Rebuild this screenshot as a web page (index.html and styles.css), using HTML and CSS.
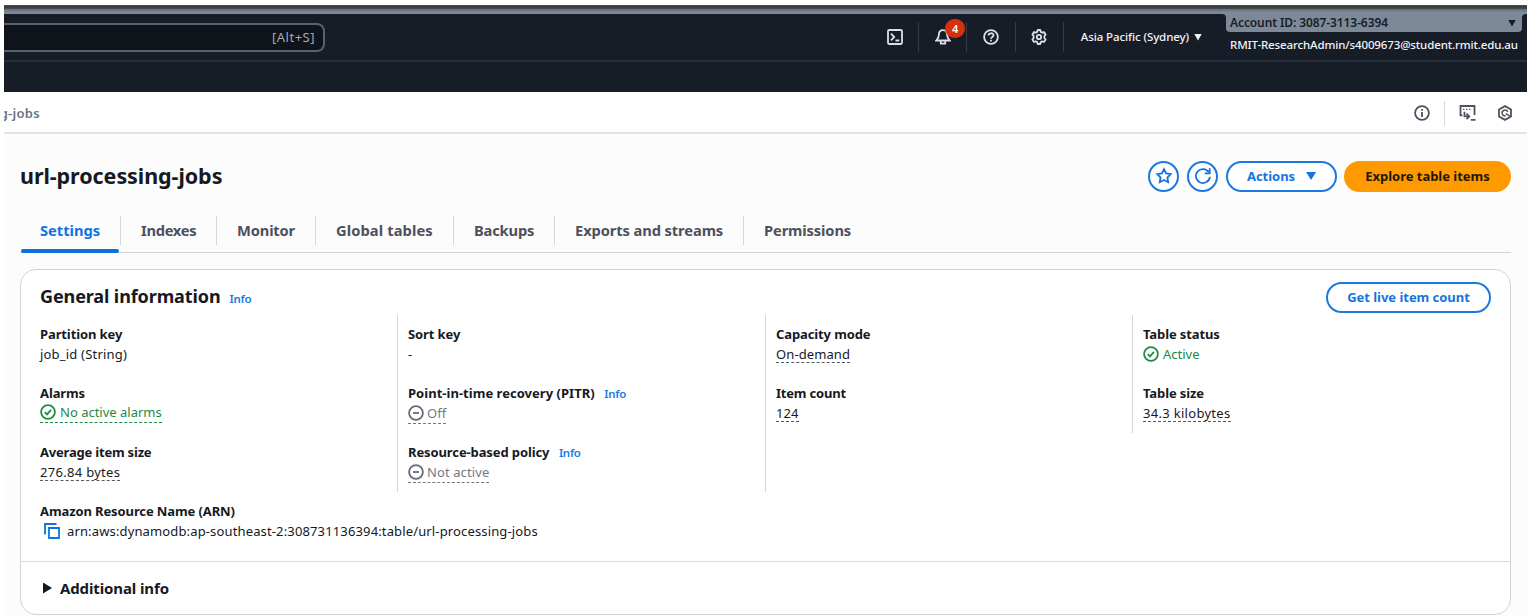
FILE: index.html
```html
<!DOCTYPE html>
<html lang="en">
<head>
<meta charset="utf-8">
<title>url-processing-jobs</title>
<link rel="stylesheet" href="styles.css">
</head>
<body>
<div class="page">
  <header class="header">
    <div class="top-strip"></div>
    <div class="account-strip"></div>
    <div class="nav">
      <div class="nav-main">
        <div class="search"><span>[Alt+S]</span></div>
        <div class="nav-tools">
          <div class="tool"><svg width="16" height="16" viewBox="0 0 16 16"><rect x="1" y="1" width="14" height="14" rx="1.2"/><path d="M4 4.7 7.2 8 4 11.3M8.5 11.5h3.8"/></svg></div>
          <div class="tool"><svg width="16" height="16" viewBox="0 0 16 16"><path d="M8 1.2C5 1.2 3.9 3.5 3.9 5.8c0 3-1.2 4.2-2.6 5.7h13.4c-1.4-1.5-2.6-2.7-2.6-5.7 0-2.3-1.1-4.6-4.1-4.6Z"/><path d="M5.8 12v2.6h4.4V12"/></svg><span class="badge">4</span></div>
          <div class="tool"><svg width="16" height="16" viewBox="0 0 16 16"><circle cx="8" cy="8" r="6.9"/><path d="M5.6 6.6C5.6 3.5 10.5 3.6 10.5 6.3 10.5 8 8 7.9 8 9.8M8 10.8v1.6"/></svg></div>
          <div class="tool"><svg width="16" height="16" viewBox="0 0 16 16"><path stroke-linejoin="round" d="M6.7 1h2.6l.5 1.9 1.3.7 1.9-.6 1.6 2.4L13.400 7v2l1.200 1.600L13 13l-1.900-.6-1.300.7L9.300 15H6.700l-.5-1.900-1.300-.7L3 13l-1.600-2.400L2.600 9V7L1.400 5.400 3 3l1.900.6 1.300-.7Z"/><circle cx="8" cy="8" r="2.200"/></svg></div>
        </div>
        <div class="region"><span>Asia Pacific (Sydney)</span><i class="caret"></i></div>
      </div>
      <div class="account">
        <div class="account-id"><span>Account ID: 3087-3113-6394</span><i class="caret"></i></div>
        <div class="account-user"><span>RMIT-ResearchAdmin/s4009673@student.rmit.edu.au</span></div>
      </div>
      <div class="nav-edge"></div>
    </div>
    <div class="favorites"></div>
  </header>

  <div class="crumbs">
    <div class="crumb"><span>g-jobs</span></div>
    <div class="crumb-tools">
      <svg width="16" height="16" viewBox="0 0 16 16"><circle cx="8" cy="8" r="6.900"/><path d="M8 7v5M8 4v1.700"/></svg>
      <i class="rule"></i>
      <svg class="shell" width="17" height="16" viewBox="0 0 17 16"><path d="M3.500 10.300H1.500V1h14v9"/><path d="M4 4.300h1.400M7 4.300h1.400M10 4.300h1.400" stroke-width="1.300"/><path d="M5.500 6.800v4.600H9M7.500 8.600l2.800 2.800-2.800 2.800M11.800 14.900h4.700"/></svg>
      <svg width="16" height="16" viewBox="0 0 16 16"><path d="m8 1.100 6 3.400v7l-6 3.400-6-3.400v-7Z"/><path d="m12.800 11.200-4-2.600M10.700 6.900A2.900 2.900 0 1 0 8.600 10.800" stroke-width="1.500"/></svg>
    </div>
  </div>

  <main class="content">
    <div class="title-row">
      <h1>url-processing-jobs</h1>
      <div class="actions">
        <button class="btn round"><svg width="18" height="18" viewBox="0 0 18 18"><path d="m9 2.200 2.100 4.300 4.600.7-3.300 3.300.8 4.700L9 13l-4.200 2.200.8-4.700-3.300-3.300 4.600-.7Z"/></svg></button>
        <button class="btn round"><svg width="18" height="18" viewBox="0 0 18 18"><path d="M15.900 9.800A7 7 0 1 1 14.800 5.200"/><path d="M15.700 1.300v5h-5"/></svg></button>
        <button class="btn menu"><span>Actions</span><i class="caret"></i></button>
        <button class="btn primary"><span>Explore table items</span></button>
      </div>
    </div>

    <nav class="tabs">
      <a class="tab active"><span>Settings</span></a>
      <a class="tab t-indexes"><span>Indexes</span></a>
      <a class="tab t-monitor"><span>Monitor</span></a>
      <a class="tab t-global"><span>Global tables</span></a>
      <a class="tab t-backups"><span>Backups</span></a>
      <a class="tab t-exports"><span>Exports and streams</span></a>
      <a class="tab t-perms"><span>Permissions</span></a>
    </nav>

    <section class="card">
      <div class="card-head">
        <h2>General information</h2><a class="info">Info</a>
        <button class="btn live"><span>Get live item count</span></button>
      </div>
      <div class="grid">
        <div class="col">
          <div class="field"><b>Partition key</b><p class="w20">job_id (String)</p></div>
          <div class="field"><b>Alarms</b><p class="ok dash-icon"><svg width="16" height="16" viewBox="0 0 16 16"><circle cx="8" cy="8" r="6.900"/><path d="m4.800 8.200 2.200 2.200 4-4.500"/></svg><span>No active alarms</span></p></div>
          <div class="field"><b class="tight">Average item size</b><p class="dash w30">276.84 bytes</p></div>
        </div>
        <div class="col">
          <div class="field"><b>Sort key</b><p>-</p></div>
          <div class="field"><b class="loose">Point-in-time recovery (PITR)</b><a class="info">Info</a><p class="off dash-icon"><svg width="16" height="16" viewBox="0 0 16 16"><circle cx="8" cy="8" r="6.900"/><path d="M5 8h6"/></svg><span>Off</span></p></div>
          <div class="field"><b>Resource-based policy</b><a class="info">Info</a><p class="off dash-icon"><svg width="16" height="16" viewBox="0 0 16 16"><circle cx="8" cy="8" r="6.900"/><path d="M5 8h6"/></svg><span>Not active</span></p></div>
        </div>
        <div class="col">
          <div class="field"><b>Capacity mode</b><p class="dash">On-demand</p></div>
          <div class="field"><b class="tight">Item count</b><p class="dash">124</p></div>
        </div>
        <div class="col short">
          <div class="field"><b>Table status</b><p class="ok"><svg width="16" height="16" viewBox="0 0 16 16"><circle cx="8" cy="8" r="6.900"/><path d="m4.800 8.200 2.200 2.200 4-4.500"/></svg><span>Active</span></p></div>
          <div class="field"><b>Table size</b><p class="dash w30">34.3 kilobytes</p></div>
        </div>
      </div>
      <div class="arn">
        <b>Amazon Resource Name (ARN)</b>
        <p><svg width="16" height="16" viewBox="0 0 16 16"><path d="M1 11.500V1h11.500M5 5h10v10H5Z"/></svg><span>arn:aws:dynamodb:ap-southeast-2:308731136394:table/url-processing-jobs</span></p>
      </div>
      <div class="more"><i class="expand"></i><span>Additional info</span></div>
    </section>
  </main>
</div>
</body>
</html>
```
FILE: styles.css
```css
* { box-sizing: border-box; }
body {
  margin: 0;
  background: #fff;
  color: #16191f;
  font: 13px/20px "Noto Sans", "Open Sans", sans-serif;
  letter-spacing: 0.1px;
  overflow: hidden;
}
h1, h2, p { margin: 0; }
b, h1, h2 { font-weight: 700; }
b { letter-spacing: -0.110px; }
b.tight { letter-spacing: -0.200px; }
b.loose { letter-spacing: 0.030px; }
svg { fill: none; stroke: currentColor; stroke-width: 1.8; flex: none; display: block; }
.page { width: 1523px; height: 616px; margin-left: 4px; padding-top: 5px; display: flex; flex-direction: column; }

/* Global header */
.header { flex: none; color: #f3f3f7; }
.top-strip { height: 4px; background: linear-gradient(#55584f, #383a36 40%, #4a4f55); }
.account-strip { height: 5px; background: linear-gradient(#616b78, #7d8998 60%); }
.nav { height: 46px; display: flex; background: #7d8998; }
.nav-main { width: 1222px; display: flex; align-items: center; background: #171d27; border-radius: 0 4px 0 0; }
.search {
  width: 321px; height: 29px; display: flex; align-items: center; justify-content: flex-end;
  padding: 0 8px 1px 0; border: 2px solid #5a616d; border-left: 0; border-radius: 0 8px 8px 0;
  background: #0f141a; color: #a4a8b1; letter-spacing: 0.5px;
}
.nav-tools { display: flex; margin-left: 546px; }
.tool { position: relative; width: 48.200px; height: 30px; display: flex; align-items: center; justify-content: center; border-right: 1px solid #353c48; color: #dedee6; }
.tool .badge {
  position: absolute; left: 26px; top: -3px; width: 20px; height: 19px; border-radius: 10px;
  background: #d6310f; color: #fff; font: 600 11px/19px "Noto Sans", sans-serif; text-align: center;
}
.region { display: flex; align-items: center; margin-left: 17px; font-size: 11.500px; font-weight: 500; letter-spacing: -0.1px; gap: 5px; }
.caret { width: 8px; height: 7px; background: currentColor; clip-path: polygon(0 0, 100% 0, 50% 100%); }
.account { width: 296px; background: #171d27; font-size: 12px; }
.account-id { height: 18px; display: flex; align-items: center; justify-content: space-between; padding: 0 6px 0 4px; background: #7d8998; border-radius: 0 0 4px 4px; color: #171d27; font-weight: 600; letter-spacing: -0.1px; }
.account-user { padding: 3px 0 0 4px; font-size: 11.500px; font-weight: 500; letter-spacing: -0.130px; white-space: nowrap; }
.nav-edge { flex: 1; background: #171d27; border-radius: 4px 0 0 0; }
.favorites { height: 32px; background: #171d27; border-top: 2px solid #29303b; }

/* Breadcrumb bar */
.crumbs { flex: none; height: 42px; display: flex; justify-content: space-between; align-items: center; border-bottom: 2px solid #e3e4e8; }
.crumb { width: 36px; display: flex; justify-content: flex-end; overflow: hidden; white-space: nowrap; color: #6a7281; font-weight: 600; letter-spacing: 0.3px; padding-top: 1px; }
.crumb-tools { display: flex; align-items: center; padding: 2px 14px 0 0; color: #4b5260; }
.crumb-tools .rule { width: 1px; height: 25px; background: #d5d7dd; margin: 0 14px; }
.crumb-tools .shell { margin-right: 21px; }

/* Content */
.content { flex: 1; background: #fcfcfc; padding: 25px 16px 0; }
.title-row { height: 34px; display: flex; justify-content: space-between; align-items: center; }
h1 { font-size: 21.500px; line-height: 30px; letter-spacing: -0.070px; margin-top: 0; }
.actions { display: flex; gap: 8px; }
.btn {
  height: 31px; display: flex; align-items: center; justify-content: center; padding: 0;
  border: 2px solid #1a79e0; border-radius: 16px; background: #fff; color: #1474df;
  font: 700 13px/20px "Noto Sans", "Open Sans", sans-serif; letter-spacing: -0.030px;
}
.round { width: 31px; }
.menu { width: 111px; gap: 11px; margin-right: -1px; }
.menu .caret { width: 10px; height: 8px; }
.primary { width: 167px; background: #f90; border-color: #f90; color: #20180b; }

.tabs { display: flex; height: 44px; margin-top: 16px; border-bottom: 1px solid #d3d4d8; font-size: 14.700px; font-weight: 700; letter-spacing: -0.020px; color: #4b515d; }
.tab { position: relative; padding: 11px 20px 0; height: 44px; white-space: nowrap; line-height: 20px; }
.tab:not(:last-child) { border-right: 1px solid transparent; border-image: linear-gradient(transparent 8px, #d5d7dc 8px 35px, transparent 35px) 1; border-width: 0 1px 0 0; border-style: solid; }
.tab.active { color: #0f73e0; width: 101px; }
.tab.active::after { content: ""; position: absolute; left: 1px; right: 1px; bottom: 0; height: 4px; border-radius: 2px; background: #0d70dd; }
.t-indexes { letter-spacing: -0.300px; width: 96px; }
.t-monitor { letter-spacing: -0.150px; width: 99px; }
.t-global { letter-spacing: 0.100px; width: 138px; }
.t-backups { width: 101px; letter-spacing: -0.180px; }
.t-exports { letter-spacing: -0.100px; width: 189px; }
.t-perms { letter-spacing: -0.120px; }

.card { margin-top: 16px; height: 346px; border: 1px solid #d0d3d9; border-radius: 16px; background: #fff; }
.card-head { display: flex; align-items: center; height: 45px; padding: 10px 19px 0; }
h2 { font-size: 18px; line-height: 26px; letter-spacing: -0.110px; margin-top: -3px; }
.info { color: #1c7ae2; font-size: 11.500px; font-weight: 600; letter-spacing: -0.300px; margin-left: 9.500px; }
h2 + .info { padding-top: 3px; margin-left: 9px; }
.live { width: 165px; margin-left: auto; padding-bottom: 1px; }

.grid { display: grid; grid-template-columns: 366px 368px 367px 1fr; align-items: start; padding-left: 10px; }
.col { display: flex; flex-direction: column; gap: 19px; height: 177px; padding: 9px 0 0 10px; }
.col:first-child { padding-left: 9px; }
.col + .col { border-left: 1px solid #d3d5da; }
.col.short { height: 118px; }
.field { height: 40px; white-space: nowrap; }
.field p, .arn p { display: flex; align-items: center; width: fit-content; height: 20px; }
.w20 { letter-spacing: 0.200px; }
.w30 { letter-spacing: 0.300px; }
.ok { color: #218a46; gap: 4px; letter-spacing: 0; }
.off { color: #737985; gap: 3px; }
.off svg { color: #646a77; }
.field .dash { height: 19px; line-height: 20px; padding-top: 1px; border-bottom: 1px dashed #535863; }
.field .dash-icon { height: 20px; border-bottom: 1px dashed currentColor; }
.dash-icon svg, .dash-icon span { margin-top: -1px; }

.arn { padding: 9px 19px 0; height: 69px; }
.arn p { padding-left: 4px; gap: 7px; letter-spacing: 0.140px; }
.arn svg { color: #0d73e0; }
.more { display: flex; align-items: center; gap: 8px; border-top: 1px solid #d9dade; height: 54px; padding: 0 0 1px 22px; font-size: 15px; font-weight: 700; letter-spacing: -0.120px; }
.expand { width: 9px; height: 11px; background: #16191f; clip-path: polygon(0 0, 100% 50%, 0 100%); }
```
